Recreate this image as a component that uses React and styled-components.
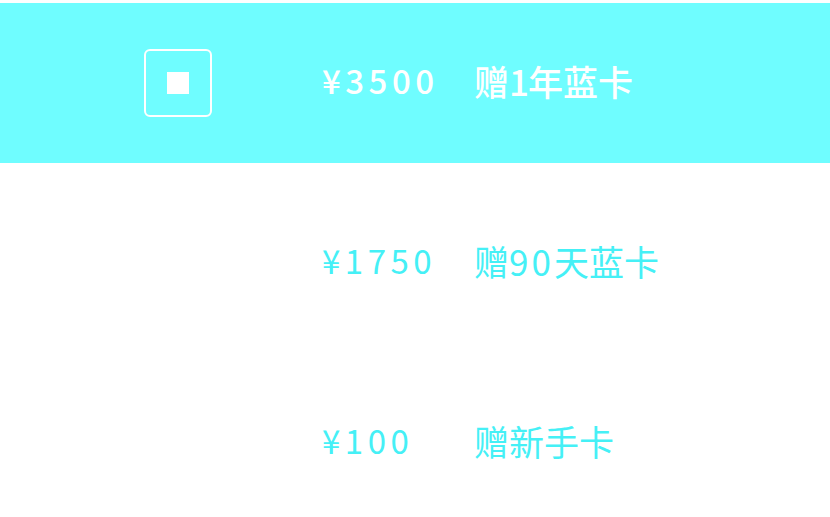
import React from "react";
import styled, { createGlobalStyle } from "styled-components";

const Global = createGlobalStyle`
  html, body { margin: 0; padding: 0; background: #ffffff; }
  body { font-family: "Noto Sans CJK SC", "Noto Sans", sans-serif; overflow: hidden; }
`;

const List = styled.div`
  display: flex;
  flex-direction: column;
  gap: 20px;
  padding-top: 3px;
  width: 830px;
`;

const Row = styled.div`
  height: 160px;
  box-sizing: border-box;
  display: flex;
  align-items: center;
  padding-left: 144px;
  background: ${(p) => (p.$active ? "#6ffdff" : "transparent")};
  color: ${(p) => (p.$active ? "#ffffff" : "#45f0f6")};
  font-weight: ${(p) => (p.$active ? 500 : 400)};
`;

const Check = styled.div`
  box-sizing: border-box;
  flex: none;
  width: 68px;
  height: 68px;
  margin-right: 110px;
  border: 2px solid #ffffff;
  border-radius: 6px;
  display: flex;
  align-items: center;
  justify-content: center;
  visibility: ${(p) => (p.$visible ? "visible" : "hidden")};
`;

const Dot = styled.div`
  width: 22px;
  height: 22px;
  background: #ffffff;
`;

const Price = styled.div`
  flex: none;
  width: 152px;
  margin-bottom: 6px;
  font-size: 33px;
  letter-spacing: 4.5px;
  line-height: 1;
  white-space: nowrap;
`;

const Gift = styled.div`
  margin-bottom: 6px;
  font-size: 35px;
  line-height: 1;
  white-space: nowrap;
`;

const Num = styled.span`
  letter-spacing: ${(p) => (p.$wide ? "3px" : "-1px")};
`;

const items = [
  { price: "¥3500", gift: ["赠", "1", "年蓝卡"], active: true },
  { price: "¥1750", gift: ["赠", "90", "天蓝卡"], active: false },
  { price: "¥100", gift: ["赠新手卡"], active: false },
];

export default function App() {
  return (
    <>
      <Global />
      <List>
        {items.map((it) => (
          <Row key={it.price} $active={it.active}>
            <Check $visible={it.active}>
              <Dot />
            </Check>
            <Price>{it.price}</Price>
            <Gift>
              {it.gift.map((part, i) =>
                /\d/.test(part) ? (
                  <Num key={i} $wide={part.length > 1}>{part}</Num>
                ) : (
                  <span key={i}>{part}</span>
                )
              )}
            </Gift>
          </Row>
        ))}
      </List>
    </>
  );
}
